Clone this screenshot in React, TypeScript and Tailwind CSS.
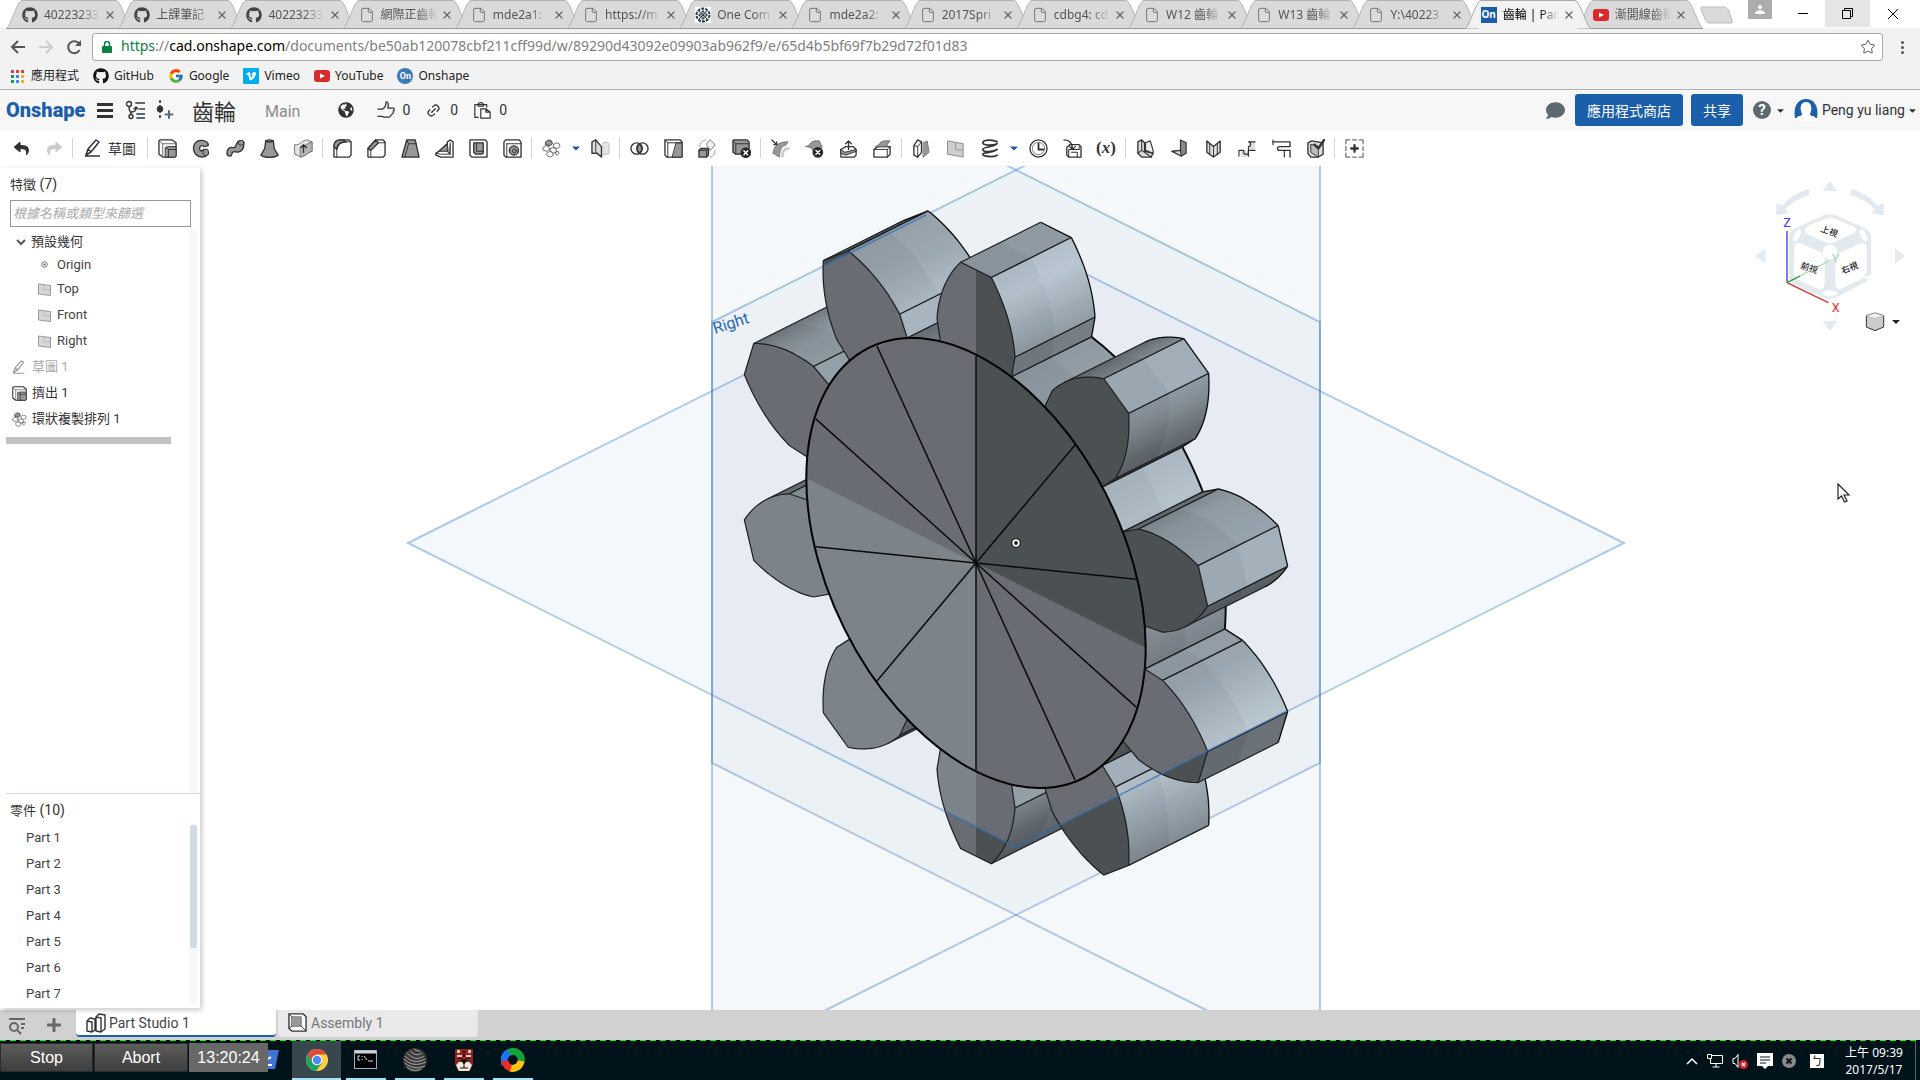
import React from "react";
import { FaGithub, FaGlobeAmericas, FaComment, FaCaretDown, FaPlus, FaReply } from "react-icons/fa";
import { FcGoogle } from "react-icons/fc";
import { File as FileIcon, Link2, X, Star } from "lucide-react";

type Pt = [number, number];

/* ---------- small helpers ---------- */

function Ico({ children, size = 20 }: { children: React.ReactNode; size?: number }) {
  return (
    <svg width={size} height={size} viewBox="0 0 20 20" fill="none" stroke="#333" strokeWidth="1.4" strokeLinejoin="round" strokeLinecap="round" aria-hidden="true" className="shrink-0">
      {children}
    </svg>
  );
}

const G = "#989898";

const glyphs: Record<string, React.ReactNode> = {
  extrude: (<><path d="M1 2l1-1h13l4 3v14l-1 1H5l-4-3z" fill="#fff" /><path d="M1 2l4 3h14M5 5v14" strokeWidth="1" stroke="#666" /><path d="M8 9l2-1h9v10l-1 1H8z" fill={G} strokeWidth="1" /><path d="M8 9l3 2h8M11 11v8" strokeWidth="1" /></>),
  revolve: (<><path d="M17 5c-3-5-13-5-15 2-2 8 4 12 9 12 3 0 5-2 6-3l-1-4-4-1c-1 2-4 2-4-1s3-4 5-2l4-1z" fill={G} /><ellipse cx="14.500" cy="14" rx="3" ry="3.500" fill={G} strokeWidth="1" /></>),
  sweep: (<><path d="M1 15c0-5 3-7 7-6 3 1 2-6 6-7l3 0c3 2 2 9-2 11-4 2-6-1-8 1-1 1-1 4-2 4-3 0-4-1-4-3z" fill={G} /><ellipse cx="16" cy="4" rx="3" ry="2.500" strokeWidth="1" fill={G} /></>),
  loft: (<><path d="M6 2c2-1 6-1 8 0l1 8 4 7c-4 3-14 3-18 0l4-7z" fill={G} /><path d="M6 2c2 1.500 6 1.500 8 0" /></>),
  thicken: (<><path d="M1 6c6 1 7-5 13-5l5 2v10c-5 1-6 5-12 6l-6-3z" fill="#e2e2e2" stroke="#777" strokeWidth="1" /><path d="M7 9c5-1 7-5 12-6v10c-5 1-6 5-12 6z" fill="#b5b5b5" stroke="#777" strokeWidth="1" /><path d="M10 14V6M7 9l3-3 3 3" /></>),
  fillet: (<><path d="M1 8c0-5 3-7 7-7h9l2 2v14l-2 2H1z" fill="#fff" /><path d="M1 8c0-5 3-7 7-7h3l3 2c-6 0-9 2-10 8z" fill={G} /><path d="M4 19V9c1-4 3-6 8-6h7" strokeWidth="1" /></>),
  chamfer: (<><path d="M1 10l8-9h8l2 2v14l-2 2H1z" fill="#fff" /><path d="M1 10l8-9 3 3-8 8z" fill={G} /><path d="M4 19v-7l8-8h7" strokeWidth="1" /></>),
  draft: (<><path d="M6 1h9l4 18H1z" fill={G} /><path d="M6 1l2 4-4 14M8 5h8" strokeWidth="1" /></>),
  rib: (<><path d="M1 15l3-2 9-8V3l3-2 3 2v16H6l-5-2z" fill="#fff" /><path d="M4 13h9V5zM16 4v12l-3-3" fill={G} strokeWidth="1.100" /><path d="M1 15l5 1h10" strokeWidth="1" /></>),
  shell: (<><path d="M1 1h16l2 2v16H3l-2-2z" fill="#fff" /><path d="M5 4h10v11l-2 1H7l-2-2z" fill={G} /><path d="M8 4v9h7" strokeWidth="1" /></>),
  hole: (<><path d="M1 3l2-2h14l2 2v16H3l-2-2z" fill="#fff" /><path d="M4 5h15M4 5v14" strokeWidth="1" /><circle cx="11.500" cy="12" r="4.800" fill={G} /><circle cx="12" cy="12.500" r="2" strokeWidth="1" /></>),
  pattern: (<><path d="M4 3l3-2 3 1 1 3-3 2-4-1z" fill={G} strokeWidth="1" /><path d="M12 6l3-2 3 1 1 3-3 2-3-1zM1 9l3-2 3 1 1 3-3 2-3-1zM9 10l3-1 3 2v3l-3 1-3-2zM5 15l3-2 3 1 1 3-3 2-3-1zM14 14l3-1 1 2-2 2z" fill="#fff" stroke="#666" strokeWidth="1" /></>),
  mirror: (<><path d="M1 3l4-2 6 7v11l-5-4H1z" fill="#ddd" /><path d="M5 1v12l6 6" strokeWidth="1" /><path d="M13 4l3-1 3 2v10l-6 2z" fill="#e5e5e5" stroke="#bbb" strokeWidth="1" /></>),
  boolean: (<><circle cx="7" cy="10" r="6" /><circle cx="13" cy="10" r="6" /><path d="M10 5c3 3 3 7 0 10-3-3-3-7 0-10z" fill={G} /></>),
  split: (<><path d="M1 1h16l2 2v16H3l-2-2z" fill="#fff" /><path d="M13 4h6v15H9z" fill={G} strokeWidth="1" /><path d="M1 1l3 3h15M4 4v15" strokeWidth="1" /></>),
  transform: (<><path d="M1 12l2-2h8v7l-2 2H1z" fill={G} /><path d="M1 12h8v7M9 12l2-2" strokeWidth="1" /><path d="M13 1l5 5-5 6-4-6z" fill="#eee" stroke="#777" strokeWidth="1" /><path d="M2 8c0-4 2-6 6-7M18 12c0 4-2 6-5 7" stroke="#999" strokeWidth="1" /></>),
  deletePart: (<><path d="M1 2l1-1h14l2 2v13H4l-3-2z" fill={G} /><path d="M1 2l3 3h14M4 5v11" strokeWidth="1" /><circle cx="14.500" cy="14.500" r="5" fill="#222" /><path d="M12.500 12.500l4 4m0-4l-4 4" stroke="#fff" strokeWidth="1.500" /></>),
  modifyFillet: (<><path d="M4 9c2-4 7-6 14-6l-3 4c-4 0-6 5-6 12L2 15c0-2 1-4 2-6z" fill={G} stroke="#777" strokeWidth="1" /><path d="M12 18c0-4 2-8 6-8" stroke="#ccc" strokeWidth="3" /><path d="M1 1l5 5M6 3v3H3" strokeWidth="1.300" /></>),
  deleteFace: (<><path d="M1 8c4 0 4-5 9-6h5l3 7-8 7c-1-5-4-8-9-8z" fill={G} strokeWidth="1" stroke="#666" /><circle cx="13.500" cy="14" r="5" fill="#222" /><path d="M11.500 12l4 4m0-4l-4 4" stroke="#fff" strokeWidth="1.500" /></>),
  moveFace: (<><path d="M2 11l5-3h8l3 3v6l-2 2H2z" fill="#fff" /><path d="M2 11l4 3 12-3v2L7 17l-5-2z" fill={G} strokeWidth="1" /><path d="M10 11V2M7 5l3-3 3 3" /></>),
  replaceFace: (<><path d="M1 11l4-3h13v8l-3 3H1z" fill="#fff" /><path d="M1 11h14l3-3M15 11v8" strokeWidth="1" /><path d="M3 8c4-1 4-6 9-6h6c-3 2-2 5-5 6z" fill={G} stroke="#666" strokeWidth="1" /></>),
  offset: (<><path d="M2 7l4-6 4 2v11l-4 5-4-2z" fill="#fff" /><path d="M2 7l4 1 4-5M6 8v11" strokeWidth="1" /><path d="M12 4l4-2 2 12-6 5z" fill={G} stroke="#777" strokeWidth="1" /></>),
  plane: (<><path d="M2 2l16 3v14L2 16z" fill="#cfcfcf" stroke="#888" strokeWidth="1" /><path d="M10 4v7l8 1" stroke="#999" strokeWidth="1" /></>),
  helix: (<path d="M18 3c-5-3-15-2-15 1s10 3 15 1c-4 4-15 3-15 6s10 3 15 0c-4 4-15 3-15 5s10 4 15 1" strokeWidth="1.800" />),
  curve: (<><circle cx="10" cy="10" r="9" /><circle cx="10" cy="10" r="6.500" stroke="#777" strokeWidth="1" /><path d="M10 5v6h5" strokeWidth="2" /></>),
  importPart: (<><path d="M4 9l3-3h10l2 2v11H6l-2-2z" fill="#fff" /><path d="M6 11h11V8M6 11v8M9 14h6v5" strokeWidth="1.100" /><path d="M1 1c6 0 9 3 9 10M7 8l3 3 3-3" /></>),
  sheet1: (<><path d="M2 3l4-2 3 3v9l9 2-2 4H6l-4-4z" fill="#ddd" /><path d="M6 1v11l-4 3M6 12l10 7" strokeWidth="1.100" /><path d="M10 4l5-2 3 10v3l-8-3z" fill="#eee" strokeWidth="1.200" /></>),
  sheet2: (<><path d="M2 13l9-1V1l6 3v11l-5 3z" fill="#888" strokeWidth="1.200" /><path d="M2 13l9-1 1 6z" fill="#ddd" strokeWidth="1.200" /></>),
  sheet3: (<><path d="M3 2l7 6 7-6v12l-7 5-7-5z" fill="#ddd" /><path d="M10 8v11M6 5v11M14 5v11" strokeWidth="1" /></>),
  sheet4: (<><path d="M3 12h9v7H3zM12 2h6v9h-6z" fill="#ddd" stroke="none" /><path d="M1 18v-6h5v2c0 3 5 3 5 0V8c3 0 3-5 0-5h7M12 12h6M11 14v4" strokeWidth="1.200" /></>),
  sheet5: (<><path d="M1 3h18V8H8c-3 0-3 4 0 4h11v7" /><path d="M1 1v5M13 12v7" strokeWidth="1.200" /></>),
  finish: (<><path d="M2 4l4-2 12 2v12l-5 3H5l-3-4z" fill="#ddd" /><path d="M5 6v8l8 5V8z" fill="#bbb" strokeWidth="1" /><path d="M9 6l4 4 6-9" strokeWidth="2.500" /></>),
  addTool: (<><path d="M1 5V1h4M8 1h4M15 1h4v4M19 8v4M19 15v4h-4M12 19H8M5 19H1v-4M1 12V8" stroke="#777" /><path d="M10 6.500v7M6.500 10h7" strokeWidth="2.400" /></>),
};

const toolGroups: string[][] = [
  ["extrude", "revolve", "sweep", "loft", "thicken"],
  ["fillet", "chamfer", "draft", "rib", "shell", "hole"],
  ["pattern", "caret", "mirror"],
  ["boolean", "split", "transform", "deletePart"],
  ["modifyFillet", "deleteFace", "moveFace", "replaceFace"],
  ["offset", "plane", "helix", "caret", "curve", "importPart", "variable"],
  ["sheet1", "sheet2", "sheet3", "sheet4", "sheet5", "finish"],
  ["addTool"],
];

function Pencil({ color = "#333", size = 18 }: { color?: string; size?: number }) {
  return (
    <svg width={size} height={size} viewBox="0 0 18 18" fill="none" stroke={color} strokeWidth="1.500" strokeLinejoin="round" aria-hidden="true" className="shrink-0">
      <path d="M2 16l2-6 8-9 3 2-8 10zM4 10l3 3M1 17h15" />
    </svg>
  );
}

/* ---------- browser chrome ---------- */

function YouTubeIcon() {
  return (
    <svg width="16" height="16" viewBox="0 0 16 16" aria-hidden="true" className="shrink-0">
      <rect x="0" y="2" width="16" height="12" rx="3" fill="#d92b2b" />
      <path d="M6 5.500l5 2.500-5 2.500z" fill="#fff" />
    </svg>
  );
}

const tabs = [
  { icon: "gh", t: "40223233" },
  { icon: "gh", t: "上課筆記" },
  { icon: "gh", t: "40223233" },
  { icon: "f", t: "網際正齒輪" },
  { icon: "f", t: "mde2a1:" },
  { icon: "f", t: "https://m" },
  { icon: "oc", t: "One Com" },
  { icon: "f", t: "mde2a2:" },
  { icon: "f", t: "2017Spri" },
  { icon: "f", t: "cdbg4: cd" },
  { icon: "f", t: "W12 齒輪" },
  { icon: "f", t: "W13 齒輪" },
  { icon: "f", t: "Y:\\40223" },
  { icon: "on", t: "齒輪 | Par", active: true },
  { icon: "yt", t: "漸開線齒輪" },
];

function TabIcon({ k }: { k: string }) {
  if (k === "gh") return <FaGithub size={16} className="shrink-0 text-[#444]" />;
  if (k === "yt") return <YouTubeIcon />;
  if (k === "on") return <span className="flex h-4 w-4 shrink-0 items-center justify-center bg-[#1b5dab] text-[10px] font-bold text-white">On</span>;
  if (k === "oc")
    return (
      <svg width="16" height="16" viewBox="0 0 16 16" fill="none" stroke="#333f44" aria-hidden="true" className="shrink-0 bg-white">
        <circle cx="8" cy="8" r="6.500" strokeWidth="2" strokeDasharray="3 1" />
        <path d="M3 8h10M8 2v12M4 4l8 8M12 4l-8 8" />
        <circle cx="8" cy="8" r="3.500" />
      </svg>
    );
  return <FileIcon size={16} strokeWidth={1.5} className="shrink-0 text-[#777]" />;
}

function TabStrip() {
  return (
    <div className="flex h-[28px] bg-white pl-[6px] font-['Noto_Sans','Noto_Sans_CJK_TC',sans-serif]">
      <div role="tablist" className="flex min-w-0 flex-1">
        {tabs.map((tab, i) => (
          <div key={i} className={`relative flex min-w-0 flex-1 items-center pl-4 ${tab.active ? "z-10" : ""}`}>
            <svg className="absolute top-0 left-0 h-[29px] w-[126px]" viewBox="0 0 126 29" aria-hidden="true">
              <path d="M0 28.500C4 28.500 11 0.500 16 0.500H110C115 0.500 122 28.500 126 28.500" fill={tab.active ? "#f2f2f2" : "#dadada"} stroke={tab.active ? "#a8a8a8" : "#b4b4b4"} />
              {!tab.active && <path d="M0 28.500H126" stroke="#999" />}
            </svg>
            <button role="tab" aria-selected={!!tab.active} className={`relative flex min-w-0 flex-1 items-center gap-[6px] pt-px text-xs ${tab.active ? "text-black" : "text-[#555]"}`}>
              <TabIcon k={tab.icon} />
              <span className="w-[56px] shrink-0 overflow-hidden text-left whitespace-nowrap [mask-image:linear-gradient(to_right,black_65%,transparent)]">{tab.t}</span>
            </button>
            <button aria-label={`Close ${tab.t}`} className="relative mr-px flex w-[14px] justify-center pt-px text-[#666]">
              <X size={12} strokeWidth={2.5} />
            </button>
          </div>
        ))}
      </div>
      <div className="flex w-[231px] items-start">
        <button aria-label="New tab" className="ml-[9px] h-[24px]">
          <svg width="36" height="24" viewBox="0 0 36 24" aria-hidden="true">
            <path d="M5 7H25C28 7 30 9 31 11L34 21C35 23 34 23 32 23H12C9 23 8 21 7 19L3 9C2 7 3 7 5 7Z" fill="#dadada" stroke="#bbb" />
          </svg>
        </button>
        <span className="ml-[14px] flex h-[19px] w-[24px] items-center justify-center bg-[#adadad]">
          <svg width="12" height="12" viewBox="0 0 12 12" fill="#fff" aria-hidden="true"><circle cx="6" cy="3" r="2" /><path d="M1 10c0-5 10-5 10 0z" /></svg>
        </span>
        <button aria-label="Minimize" className="ml-[8px] flex h-[27px] w-[45px] items-center justify-center"><span className="block h-px w-[10px] bg-black" /></button>
        <button aria-label="Restore" className="flex h-[27px] w-[45px] items-center justify-center bg-[#e5e5e5]">
          <svg width="11" height="11" viewBox="0 0 11 11" fill="none" stroke="#000" aria-hidden="true"><path d="M.5 2.500h8v8h-8zM2.500 2.500v-2h8v8h-2" /></svg>
        </button>
        <button aria-label="Close" className="flex h-[27px] w-[45px] items-center justify-center">
          <svg width="12" height="12" viewBox="0 0 12 12" stroke="#000" aria-hidden="true"><path d="M1 1l10 10M11 1L1 11" /></svg>
        </button>
      </div>
    </div>
  );
}

function AddressBar() {
  return (
    <div className="flex h-[38px] items-center bg-[#f2f2f2] pr-[12px] pl-[9px]">
      <button aria-label="Back" className="w-[18px]">
        <svg width="18" height="18" viewBox="0 0 18 18" fill="none" stroke="#555" strokeWidth="2" aria-hidden="true"><path d="M16 9H3M9 3L3 9l6 6" /></svg>
      </button>
      <button aria-label="Forward" className="ml-[10px] w-[18px]">
        <svg width="18" height="18" viewBox="0 0 18 18" fill="none" stroke="#ccc" strokeWidth="2" aria-hidden="true"><path d="M2 9h13M9 3l6 6-6 6" /></svg>
      </button>
      <button aria-label="Reload" className="ml-[10px] w-[18px]">
        <svg width="18" height="18" viewBox="0 0 18 18" fill="none" stroke="#555" strokeWidth="2" aria-hidden="true"><path d="M14.500 12A6 6 0 1 1 14 5.500" /><path d="M16 2v6h-6z" fill="#555" stroke="none" /></svg>
      </button>
      <div className="ml-[9px] flex h-[28px] flex-1 items-center rounded-[3px] border border-[#a9a9a9] bg-white pr-[6px] pl-[9px]">
        <svg width="10" height="12" viewBox="0 0 10 12" aria-hidden="true"><rect x="0" y="5" width="10" height="7" rx="1" fill="#0b8043" /><path d="M2.500 5V3a2.500 2.500 0 0 1 5 0v2" fill="none" stroke="#0b8043" strokeWidth="1.500" /></svg>
        <div className="ml-[9px] flex-1 pb-[2px] font-['Noto_Sans',sans-serif] text-sm whitespace-nowrap text-[#808080]">
          <span className="text-[#0b8043]">https</span>://<span className="text-black">cad.onshape.com</span>/documents/be50ab120078cbf211cff99d/w/89290d43092e09903ab962f9/e/65d4b5bf69f7b29d72f01d83
        </div>
        <button aria-label="Bookmark this page"><Star size={16} strokeWidth={1.5} className="text-[#555]" /></button>
      </div>
      <button aria-label="Chrome menu" className="ml-[13px] flex w-[12px] flex-col items-center gap-[2px]">
        <span className="h-[3px] w-[3px] rounded-full bg-[#555]" /><span className="h-[3px] w-[3px] rounded-full bg-[#555]" /><span className="h-[3px] w-[3px] rounded-full bg-[#555]" />
      </button>
    </div>
  );
}

function Bookmarks() {
  const dots = ["#db4437", "#db4437", "#db4437", "#0f9d58", "#4285f4", "#f4b400", "#0f9d58", "#4285f4", "#f4b400"];
  const link = "flex items-center gap-[5px]";
  return (
    <div className="flex h-[24px] items-center gap-[14px] border-b border-[#b2b2b2] bg-[#f2f2f2] pb-[3px] pl-[11px] font-['Noto_Sans','Noto_Sans_CJK_TC',sans-serif] text-xs text-[#222]">
      <a href="#apps" className="flex items-center gap-[7px]">
        <span className="grid grid-cols-3 gap-[2px]">{dots.map((c, i) => <span key={i} className="h-[3px] w-[3px]" style={{ backgroundColor: c }} />)}</span>
        應用程式
      </a>
      <a href="#github" className={link}><FaGithub size={16} className="text-[#111]" />GitHub</a>
      <a href="#google" className={link}><FcGoogle size={16} />Google</a>
      <a href="#vimeo" className={link}>
        <svg width="16" height="16" viewBox="0 0 16 16" aria-hidden="true"><rect width="16" height="16" rx="1" fill="#00adef" /><path d="M3 6l3-2c2 0 1 5 2.500 5.500C9.500 9 10 7 8.500 6.500 9 3.500 13 3 13 5.500c0 3-4 7-5.500 7S6 8 5 6.500L4 7z" fill="#fff" /></svg>
        Vimeo
      </a>
      <a href="#youtube" className={link}><YouTubeIcon />YouTube</a>
      <a href="#onshape" className={link}><span className="flex h-4 w-4 items-center justify-center rounded-full bg-[#3d78b8] font-['Roboto'] text-[9px] font-bold text-white">On</span>Onshape</a>
    </div>
  );
}

/* ---------- application header and tools ---------- */

function AppHeader() {
  return (
    <header className="flex h-[40px] items-center bg-[#f7f7f7] pr-[2px] pl-[6px] text-[#333]">
      <a href="#home" className="w-[91px] font-['Roboto'] text-xl font-black text-[#1b5faa]">Onshape</a>
      <button aria-label="Menu" className="flex w-[16px] flex-col gap-[3px]"><span className="h-[3px] bg-[#333]" /><span className="h-[3px] bg-[#333]" /><span className="h-[3px] bg-[#333]" /></button>
      <button aria-label="Versions" className="ml-[12px]"><Ico><circle cx="4" cy="4" r="2.500" /><circle cx="6" cy="16.500" r="2" /><path d="M4 7c0 5 2 4 2 7M6 12c4 0 5-1 5-4M9 9l2-2 2 2" /><path d="M11 3h9M15 9h5M12 14h8M12 18h8" stroke="#5d6971" strokeWidth="1.800" /></Ico></button>
      <button aria-label="Insert" className="ml-[10px]"><Ico><path d="M5 1v18" strokeDasharray="1 4" strokeWidth="2" /><circle cx="5" cy="9" r="2.500" fill="#333" /><path d="M14 11v7M10.500 14.500h7" stroke="#5d6971" strokeWidth="2" /></Ico></button>
      <h1 className="ml-[17px] font-['Noto_Sans_CJK_TC',sans-serif] text-[22px] leading-8">齒輪</h1>
      <span className="ml-[29px] pt-1 font-['Roboto'] text-base text-[#8a8a8a]">Main</span>
      <FaGlobeAmericas size={16} className="ml-[38px]" />
      <div className="ml-[23px] flex items-center gap-[16px] font-['Roboto'] text-sm">
        <button className="flex items-center gap-[7px]">
          <Ico size={18}><path d="M1 9h5c2-1 4-4 4-8 3 0 3 3 2 7h6c2 0 1 3 0 3 1 1 0 3-1 3 0 2-1 2-2 2 0 2-1 2-2 2H9c-2 0-3-1-4-1H1" /></Ico>0
        </button>
        <button className="flex items-center gap-[9px]"><Link2 size={15} strokeWidth={2} className="-rotate-45" />0</button>
        <button className="flex items-center gap-[8px]"><Ico size={17}><path d="M5 18H1V3h14v3M5 3c0-3 6-3 6 0v2H5z" /><path d="M8 8h6l5 4v7H8zM14 8v4h5" fill="#fff" /></Ico>0</button>
      </div>
      <div className="flex-1" />
      <button aria-label="Comments"><FaComment size={19} className="text-[#5d6971]" /></button>
      <button className="ml-[10px] h-[32px] w-[108px] rounded-[3px] bg-[#1b5faa] font-['Noto_Sans_CJK_TC',sans-serif] text-sm text-white">應用程式商店</button>
      <button className="ml-2 h-[32px] w-[52px] rounded-[3px] bg-[#1b5faa] font-['Noto_Sans_CJK_TC',sans-serif] text-sm text-white">共享</button>
      <button aria-label="Help" className="ml-[10px] flex items-center gap-1">
        <span className="flex h-[18px] w-[18px] items-center justify-center rounded-full bg-[#5d6971] font-['Roboto'] text-[15px] font-bold text-white">?</span>
        <FaCaretDown size={11} />
      </button>
      <button className="ml-[8px] flex items-center font-['Roboto'] text-sm">
        <svg width="24" height="24" viewBox="0 0 24 24" aria-hidden="true"><path d="M1 20C-1 8 4 1 12 1s13 7 11 19z" fill="#1b5faa" /><path d="M12 4c5 0 6 5 5 9-1 3-2 4 1 5 3 0 4 2 5 5H1c1-3 2-5 5-5 3-1 2-2 1-5-1-4 0-9 5-9z" fill="#fff" /></svg>
        <span className="ml-[4px]">Peng yu liang</span>
        <FaCaretDown size={11} className="ml-[2px]" />
      </button>
    </header>
  );
}

function Separator() {
  return <span className="mx-[2px] h-[20px] w-px shrink-0 bg-[#d5d5d5]" />;
}

function Toolbar() {
  return (
    <div role="toolbar" className="flex h-[36px] items-center bg-white pl-[11px]">
      <button aria-label="Undo" className="flex w-[20px] justify-center"><FaReply size={15} className="text-[#333]" /></button>
      <button aria-label="Redo" className="ml-[13px] flex w-[20px] justify-center"><FaReply size={15} className="-scale-x-100 text-[#ccc]" /></button>
      <span className="ml-[6px] flex"><Separator /></span>
      <button className="ml-[9px] flex w-[61px] items-center gap-[6px] font-['Noto_Sans_CJK_TC',sans-serif] text-[14px] text-[#333]"><Pencil />草圖</button>
      {toolGroups.map((group, i) => (
        <div key={i} className="flex items-center">
          <Separator />
          {group.map((name, j) =>
            name === "caret" ? (
              <button key={j} aria-label="More" className="flex w-[15px] justify-center"><FaCaretDown size={12} className="text-[#1b5faa]" /></button>
            ) : name === "variable" ? (
              <button key={j} aria-label="Variable" className="w-[34px] text-center font-['Liberation_Serif',serif] text-[17px] leading-5 font-bold text-[#333]">(<i>x</i>)</button>
            ) : (
              <button key={j} aria-label={name} className="flex w-[34px] justify-center"><Ico size={19}>{glyphs[name]}</Ico></button>
            ),
          )}
        </div>
      ))}
    </div>
  );
}

/* ---------- feature list ---------- */

function PlaneIcon() {
  return (
    <svg width="13" height="13" viewBox="0 0 13 13" fill="#d6d6d6" stroke="#999" aria-hidden="true"><path d="M.5 1l12 1.500v10L.5 11z" /><path d="M6 2v4.500l6 .5" stroke="#bbb" /></svg>
  );
}

function FeaturePanel() {
  const row = "flex h-[26px] w-full items-center text-left";
  return (
    <aside className="relative z-10 mt-[2px] mb-[2px] flex w-[200px] shrink-0 flex-col bg-white font-['Roboto','Noto_Sans_CJK_TC',sans-serif] text-[13px] text-[#444] shadow-[2px_2px_5px_rgba(0,0,0,0.22)]">
      <section className="flex min-h-0 flex-[626] flex-col">
        <h2 className="pt-[7px] pl-[10px] text-sm leading-[18px] text-[#333]"><span className="text-[13px]">特徵</span> (7)</h2>
        <input aria-label="根據名稱或類型來篩選" placeholder="根據名稱或類型來篩選" className="mt-[6px] ml-[10px] h-[27px] w-[181px] shrink-0 border border-[#999] bg-white px-[2px] text-[13px] italic outline-none placeholder:text-[#aaa]" />
        <div className="mt-[4px] mr-[3px] flex min-h-0 flex-1">
          <div className="min-w-0 flex-1">
            <button className="flex h-[22px] w-full items-center gap-[5px] pl-[16px] text-[#333]">
              <svg width="10" height="7" viewBox="0 0 10 7" fill="none" stroke="#555" strokeWidth="2" aria-hidden="true"><path d="M1 1l4 4 4-4" /></svg>
              預設幾何
            </button>
            <button className="flex h-[23px] w-full items-center pl-[41px]">
              <svg width="7" height="7" viewBox="0 0 7 7" fill="none" stroke="#777" aria-hidden="true"><circle cx="3.500" cy="3.500" r="2.800" /><circle cx="3.500" cy="3.500" r=".8" fill="#777" /></svg>
              <span className="ml-[9px]">Origin</span>
            </button>
            {["Top", "Front", "Right"].map((n) => (
              <button key={n} className={`${row} gap-[6px] pl-[38px]`}><PlaneIcon />{n}</button>
            ))}
            <button className={`${row} gap-[6px] pl-[12px] text-[#aaa]`}><Pencil color="#999" size={14} />草圖 1</button>
            <button className={`${row} gap-[5px] pl-[12px] text-[#333]`}><Ico size={15}>{glyphs.extrude}</Ico>擠出 1</button>
            <button className={`${row} gap-[5px] pl-[12px] text-[#333]`}><Ico size={15}>{glyphs.pattern}</Ico>環狀複製排列 1</button>
            <div className="mt-[5px] ml-[6px] h-[7px] w-[165px] bg-[#c1c1c1]" />
          </div>
          <div className="w-[7px] bg-[#f7f8fa]" />
        </div>
      </section>
      <section className="ml-[6px] flex min-h-0 flex-[214] flex-col border-t border-[#cddae5]">
        <h2 className="pt-[7px] pl-[4px] text-sm leading-[18px] text-[#333]"><span className="text-[13px]">零件</span> (10)</h2>
        <div className="mt-[5px] mr-[3px] mb-[4px] flex min-h-0 flex-1">
          <ul className="min-w-0 flex-1 overflow-hidden">
            {[1, 2, 3, 4, 5, 6, 7].map((n) => (
              <li key={n} className="h-[26px] pl-[20px] leading-[25px]">Part {n}</li>
            ))}
          </ul>
          <div className="w-[7px] bg-[#f7f8fa]"><div className="h-[123px] rounded-[2px] bg-[#cfdce6]" /></div>
        </div>
      </section>
    </aside>
  );
}

/* ---------- gear model ---------- */

interface Vertex { p: Pt; crease: boolean; body: boolean }

const DEPTH: Pt = [80, -40];
const TEETH = 10;
const HUB = 1.007;
const project = ([s, t]: Pt): Pt => [976 + 168.5 * s, 563 + 84.25 * s - 207 * t];
const turn = ([s, t]: Pt, a: number): Pt => [s * Math.cos(a) + t * Math.sin(a), -s * Math.sin(a) + t * Math.cos(a)];

const BASE: Pt = [0.211, 0.985];
const BEND: Pt = [0.2315, 1.089];
const TIP: Pt = [0.091, 1.416];
const CTRL: Pt = [0.215, 1.27];
const STEPS = 14;

function toothProfile(): Vertex[] {
  const right: Vertex[] = [];
  for (let i = 0; i <= STEPS; i++) {
    const k = i / STEPS;
    const a = (1 - k) * (1 - k);
    const b = 2 * k * (1 - k);
    const c = k * k;
    right.push({ p: [a * TIP[0] + b * CTRL[0] + c * BEND[0], a * TIP[1] + b * CTRL[1] + c * BEND[1]], crease: i === 0 || i === STEPS, body: false });
  }
  right.push({ p: BASE, crease: true, body: false });
  const left = right.map((v) => ({ ...v, p: [-v.p[0], v.p[1]] as Pt })).reverse();
  return [...left, ...right];
}

const SHADES: Pt[] = [[-180, 80], [-60, 85], [-30, 105], [-10, 138], [0, 150], [30, 163], [45, 180], [58, 196], [72, 172], [90, 143], [110, 106], [130, 90], [180, 80]];

function shade(deg: number): number {
  for (let i = 1; i < SHADES.length; i++) {
    const [d0, b0] = SHADES[i - 1];
    const [d1, b1] = SHADES[i];
    if (deg <= d1) return b0 + ((b1 - b0) * (deg - d0)) / (d1 - d0);
  }
  return 80;
}

const tone = (b: number) => `rgb(${Math.round(b * 0.93)},${Math.round(b)},${Math.round(b * 1.055)})`;
const pts = (list: Pt[]) => list.map((q) => `${q[0].toFixed(2)},${q[1].toFixed(2)}`).join(" ");
const shift = (q: Pt, k: number): Pt => [q[0] + DEPTH[0] * k, q[1] + DEPTH[1] * k];

/* Across-depth axis: a wall's gradient runs along it. */
const AXIS: Pt = [1 / Math.sqrt(5), 2 / Math.sqrt(5)];
const along = (q: Pt) => q[0] * AXIS[0] + q[1] * AXIS[1];

interface Wall { line: Pt[]; angles: number[]; body: boolean; order: number }

function buildGear() {
  const outline: Vertex[] = [];
  const faces: Pt[][] = [];
  const profile = toothProfile();
  const half = Math.atan2(BASE[0], BASE[1]);
  for (let i = 0; i < TEETH; i++) {
    const a = (i * 2 * Math.PI) / TEETH;
    const tooth = profile.map((v) => ({ ...v, p: turn(v.p, a) }));
    faces.push(tooth.map((v) => project(v.p)));
    tooth[tooth.length - 1].body = true;
    outline.push(...tooth);
    const gap = (2 * Math.PI) / TEETH - 2 * half;
    for (let j = 1; j < 6; j++) {
      const b = a + half + (gap * j) / 6;
      outline.push({ p: [HUB * Math.sin(b), HUB * Math.cos(b)], crease: false, body: true });
    }
  }
  const n = outline.length;
  const walls: Wall[] = [];
  let current: Wall | null = null;
  for (let i = 0; i < n; i++) {
    const v = outline[i];
    const w = outline[(i + 1) % n];
    const a = project(v.p);
    const b = project(w.p);
    const visible = DEPTH[0] * (b[1] - a[1]) - DEPTH[1] * (b[0] - a[0]) > 0;
    if (!visible) {
      current = null;
      continue;
    }
    const angle = (Math.atan2(-(w.p[1] - v.p[1]), w.p[0] - v.p[0]) * 180) / Math.PI;
    if (!current || v.crease) {
      current = { line: [a], angles: [], body: v.body, order: 0 };
      walls.push(current);
    }
    current.line.push(b);
    current.angles.push(angle);
  }
  for (const w of walls) {
    const m: Pt = [(w.line[0][0] + w.line[w.line.length - 1][0]) / 2, (w.line[0][1] + w.line[w.line.length - 1][1]) / 2];
    w.order = m[0] * DEPTH[0] + m[1] * DEPTH[1];
  }
  walls.sort((x, y) => x.order - y.order);
  return { faces, walls };
}

const gear = buildGear();

function GearWall({ wall, id }: { wall: Wall; id: string }) {
  const { line, angles, body } = wall;
  const first = line[0];
  const last = line[line.length - 1];
  const d0 = along(first);
  const length = along(last) - d0;
  const levels = line.map((_, i) => {
    const before = angles[Math.max(0, i - 1)];
    const after = angles[Math.min(angles.length - 1, i)];
    return shade((before + after) / 2) - (body ? 6 : 0);
  });
  const gradient = (name: string, extra: number) => (
    <linearGradient id={name} gradientUnits="userSpaceOnUse" x1={first[0]} y1={first[1]} x2={first[0] + AXIS[0] * length} y2={first[1] + AXIS[1] * length}>
      {line.map((q, i) => <stop key={i} offset={(along(q) - d0) / length} stopColor={tone(levels[i] + extra)} />)}
    </linearGradient>
  );
  const mid = line.map((q) => shift(q, 0.5));
  const back = line.map((q) => shift(q, 1));
  return (
    <g>
      <defs>
        {gradient(`${id}n`, -3)}
        {gradient(`${id}f`, 4)}
      </defs>
      <polygon points={pts([...line, ...[...back].reverse()])} fill={`url(#${id}n)`} />
      <polygon points={pts([...mid, ...[...back].reverse()])} fill={`url(#${id}f)`} />
      <polyline points={pts(back)} stroke="#0c0c0c" strokeWidth={body ? 2 : 1.3} fill="none" strokeLinejoin="round" />
      <polyline points={pts([first, shift(first, 1)])} stroke="#1c1f21" strokeWidth="1.200" />
      <polyline points={pts([last, shift(last, 1)])} stroke="#1c1f21" strokeWidth="1.200" />
    </g>
  );
}

function GearView() {
  const spokes = Array.from({ length: TEETH }, (_, i) => project(turn([0, 1], (i * 2 * Math.PI) / TEETH)));
  const face = (fill: string) => (
    <>
      {gear.faces.map((f, i) => <polygon key={i} points={pts(f)} fill={fill} />)}
      <circle r={HUB} transform="matrix(168.5 84.25 0 207 976 563)" fill={fill} />
    </>
  );
  return (
    <svg className="block h-full w-full" viewBox="200 166 1720 844" preserveAspectRatio="xMidYMid slice" role="img" aria-label="Gear model">
      <defs>
        <clipPath id="mid">
          <path d="M976 100H1700V1000H976ZM200 100H976V563L200 175ZM600 639L1016 847L1320 695V1010H600Z" />
        </clipPath>
        <clipPath id="dark">
          <path d="M976 100H1700V925L976 563ZM976 827L1016 847L1320 695V1010H976ZM712 321L1016 170H712Z" />
        </clipPath>
      </defs>
      <g fill="#f4f8fb">
        <path d="M712 17H1320V1067H712Z" />
        <path d="M408 543L1016 239L1624 543L1016 847Z" />
      </g>
      <path d="M712 321L1016 169L1320 321V763L1016 914L712 763Z" fill="#ecf1f5" />
      <path d="M712 391L1016 239L1320 391V695L1016 847L712 695Z" fill="#e7ebf3" />
      <g fill="none" stroke="#3c7cc0" strokeOpacity="0.4" strokeWidth="2">
        <path d="M712 322L1320 18V763L712 1067Z" />
        <path d="M712 18L1320 322V1067L712 763Z" />
        <path d="M408 543L1016 239L1624 543L1016 847Z" />
      </g>
      <text x="715" y="334" transform="rotate(-18 715 334)" fill="#2b66b1" fontFamily="Roboto" fontSize="16">Right</text>

      {gear.walls.map((w, i) => <GearWall key={i} wall={w} id={`wall${i}`} />)}

      {face("#7c8389")}
      <g clipPath="url(#mid)">{face("#696c73")}</g>
      <g clipPath="url(#dark)">{face("#4b5053")}</g>
      {gear.faces.map((f, i) => (
        <polyline key={i} points={pts(f)} fill="none" stroke="#1c1f21" strokeWidth="1.200" />
      ))}
      <circle r={HUB} transform="matrix(168.5 84.25 0 207 976 563)" fill="none" stroke="#000" strokeWidth="2" vectorEffect="non-scaling-stroke" />
      {spokes.map((s, i) => <line key={i} x1="976" y1="563" x2={s[0]} y2={s[1]} stroke="#0a0a0a" strokeWidth="1.500" />)}

      <path d="M824 266L926 215M945 811L1016 847L1287 711" fill="none" stroke="#2f6cae" strokeOpacity="0.65" strokeWidth="1.600" />
      <circle cx="1016" cy="543" r="5" fill="#222" />
      <circle cx="1016" cy="543" r="2.800" fill="none" stroke="#fff" strokeWidth="1.800" />
      <path d="M1838 484v15l3.500-3 3 6 2.500-1-3-6h5z" fill="#fff" stroke="#222" strokeWidth="1.200" />
    </svg>
  );
}

function ViewCube() {
  const pale = "#e2e9ef";
  return (
    <div className="absolute top-[4px] right-0 h-[170px] w-[180px]">
      <svg width="180" height="170" viewBox="0 0 540 510" aria-label="View cube" role="img">
        <g fill={pale}>
          <path d="M270 33l22 30h-44zM270 483l22-30h-44zM45 258l30-22v44zM495 258l-30-22v44z" />
          <path d="M206 56Q155 72 127 107L110 98L108 136L146 130L136 118Q162 88 209 74Z" />
          <path d="M334 56Q385 72 413 107L430 98L432 136L394 130L404 118Q378 88 331 74Z" />
          <path d="M255 134Q270 130 285 134L378 176Q392 184 393 200V305Q393 322 380 334L290 382Q270 390 250 382L160 342Q147 334 147 320V200Q148 184 162 176Z" />
        </g>
        <g fill="#fff">
          <path d="M205 166L258 146Q270 142 284 146L342 170Q356 180 340 190L285 216Q270 222 255 216L200 192Q186 180 205 166Z" />
          <path d="M162 235Q163 214 182 220L240 246Q254 254 254 270V342Q252 362 236 358L176 330Q162 322 161 306Z" />
          <path d="M380 235Q378 214 360 220L300 248Q286 256 286 272V340Q288 362 304 356L366 326Q380 318 380 302Z" />
          <circle cx="270" cy="246" r="22" />
          <ellipse cx="270" cy="370" rx="22" ry="9" />
          <ellipse cx="171" cy="196" rx="9" ry="20" transform="rotate(25 171 196)" />
          <ellipse cx="370" cy="196" rx="9" ry="20" transform="rotate(-25 370 196)" />
          <path d="M264 128l6 10 6-10zM370 322l12 8 14-10v-6z" />
        </g>
        <g fontFamily="'Noto Sans CJK TC', sans-serif" fontWeight="500" fill="#222" fontSize="26">
          <text x="240" y="184" transform="rotate(20 240 184)">上視</text>
          <text x="180" y="294" transform="rotate(18 180 294)">前視</text>
          <text x="308" y="312" transform="rotate(-22 308 312)">右視</text>
        </g>
        <path d="M141 338V183" stroke="#3a3ae0" strokeWidth="4" />
        <path d="M141 338L265 398" stroke="#e03030" strokeWidth="4" />
        <path d="M141 338L265 274" stroke="#8fd08f" strokeWidth="3" />
        <path d="M141 338L180 318" stroke="#2ba52b" strokeWidth="4" />
        <g fontFamily="Roboto" fontSize="38">
          <text x="130" y="171" fill="#4040e8">Z</text>
          <text x="275" y="278" fill="#a5d8a8">Y</text>
          <text x="275" y="425" fill="#e03030">X</text>
        </g>
        <g stroke="#333" strokeWidth="3" strokeLinejoin="round">
          <path d="M379 437l26-8 26 8v34l-26 11-26-11z" fill="#ccc" />
          <path d="M379 437l26 8 26-8-26-8z" fill="#f2f2f2" stroke="#999" strokeWidth="1" />
        </g>
        <path d="M456 450h24l-12 12z" fill="#222" />
      </svg>
    </div>
  );
}

/* ---------- bottom bars ---------- */

function DocumentTabs() {
  return (
    <div className="flex h-[30px] items-start bg-[#d1d1d1] font-['Roboto'] text-sm">
      <button aria-label="Search tabs" className="mt-[8px] ml-[8px]">
        <svg width="18" height="17" viewBox="0 0 18 17" fill="none" stroke="#666" strokeWidth="2" aria-hidden="true"><path d="M1 1h16M13 6h4M13 10h3" /><circle cx="6" cy="9" r="4" /><path d="M9 12l4 4" /></svg>
      </button>
      <button aria-label="Add tab" className="mt-[7px] ml-[20px]"><FaPlus size={16} className="text-[#666]" /></button>
      <button className="ml-[14px] flex h-[27px] w-[200px] items-center gap-[3px] rounded-b border-b-2 border-[#1b5faa] bg-white pl-[10px] text-[#444]">
        <Ico><path d="M1 8l3-3 5 1v11l-3 2-5-1zM10 4l3-3 6 1v14l-4 3-5-1zM1 8l5 1v10M10 4l5 1v14" fill="#fff" /></Ico>
        Part Studio 1
      </button>
      <button className="ml-[2px] flex h-[27px] w-[200px] items-center gap-[4px] rounded-b bg-[#e9e9e9] pb-[2px] pl-[10px] text-[#777]">
        <Ico size={19}><path d="M1 1h15l3 3v15H4l-3-3z" fill="#fff" /><path d="M4 4h10v10H4z" fill={G} strokeWidth="1" stroke="#777" /><path d="M1 1l3 3M1 16l3-2M14 14l5 5" strokeWidth="1" /></Ico>
        Assembly 1
      </button>
    </div>
  );
}

function TaskItem({ label, active, children }: { label: string; active?: boolean; children: React.ReactNode }) {
  return (
    <button aria-label={label} className={`flex h-[39px] w-[49px] flex-col items-center ${active ? "bg-[#38474e]" : ""}`}>
      <span className="flex h-[37px] items-center justify-center">{children}</span>
      <span className={`h-[2px] bg-[#a5e3f5] ${active ? "w-full" : "w-[40px]"}`} />
    </button>
  );
}

function Taskbar() {
  const btn = "h-[29px] border border-[#2b2b2b] bg-linear-to-b from-[#5c5c5c] to-[#3e3e3e]";
  return (
    <footer className="flex h-[40px] flex-col bg-[#00121a] text-white">
      <div className="h-px bg-[repeating-linear-gradient(to_right,#00ff00_0_6px,#000_6px_10px)]" />
      <div className="flex h-[39px] justify-between">
        <div className="flex">
          <div className="flex w-[292px] items-start pt-[2px] font-['Liberation_Sans',sans-serif] text-base">
            <button className={`${btn} w-[93px]`}>Stop</button>
            <button className={`${btn} ml-px w-[94px]`}>Abort</button>
            <span className="ml-px flex h-[29px] w-[79px] items-center justify-center bg-[#686868]">13:20:24</span>
            <div className="flex w-[12px] flex-col">
              <svg width="12" height="35" viewBox="0 0 12 35" aria-hidden="true"><path d="M0 7h11L7 26H0z" fill="#3f74d1" /><path d="M0 16l3-2M0 22h4" stroke="#fff" strokeWidth="2" /></svg>
            </div>
          </div>
          <TaskItem label="Chrome" active>
            <svg width="22" height="22" viewBox="0 0 22 22" aria-hidden="true"><circle cx="11" cy="11" r="11" fill="#ffcd40" /><path d="M1.500 5.500A11 11 0 0 0 10 22l6-8-5-3z" fill="#1da462" /><path d="M1.500 5.500L7 14l4-8.500 9.500 0A11 11 0 0 0 1.500 5.500z" fill="#dd4b3e" /><circle cx="11" cy="11" r="5.300" fill="#fff" /><circle cx="11" cy="11" r="4.200" fill="#4a8af4" /></svg>
          </TaskItem>
          <TaskItem label="Command prompt">
            <svg width="23" height="19" viewBox="0 0 23 19" aria-hidden="true"><rect x=".5" y=".5" width="22" height="18" fill="#000" stroke="#aab" /><path d="M1 2h21" stroke="#cdd3d8" strokeWidth="3" /><path d="M4 6v4M4 6h2M4 10h2M8 6v1M8 9v1M10 6l3 4M14 11h5" stroke="#ddd" /></svg>
          </TaskItem>
          <TaskItem label="Sphere">
            <svg width="24" height="24" viewBox="0 0 24 24" fill="none" aria-hidden="true"><circle cx="12" cy="12" r="12" fill="#3a3a3a" /><path d="M4 5c6 6 11 7 17 3M2 8c6 6 12 7 20 3M1 11c6 6 13 7 22 3M2 15c6 5 12 6 20 3M4 19c5 4 9 4 14 2M7 3c4 4 8 5 12 2M11 1c2 2 4 2 6 2" stroke="#a8a8a8" /></svg>
          </TaskItem>
          <TaskItem label="Tiger">
            <svg width="20" height="24" viewBox="0 0 20 24" aria-hidden="true"><path d="M1 1h18v15l-3 7H4l-3-7z" fill="#8d2525" /><path d="M3 2h3v3H3zM14 2h3v3h-3zM3 7h5v2H3zM12 7h5v2h-5z" fill="#e8c9b0" /><path d="M5 14h10l3 3-3 6H5l-3-6z" fill="#f1eadc" /><path d="M7 12h6l-3 4zM6 20h8M10 16v4M4 10l4 1M16 10l-4 1M10 2v7" stroke="#1c0c0c" fill="#1c0c0c" /></svg>
          </TaskItem>
          <TaskItem label="Swirl">
            <svg width="24" height="24" viewBox="0 0 24 24" fill="none" strokeWidth="7" aria-hidden="true"><path d="M4 16A8.500 8.500 0 0 1 9 4" stroke="#1f74f0" /><path d="M8 4.500A8.500 8.500 0 0 1 20 9" stroke="#12a538" /><path d="M19.500 8A8.500 8.500 0 0 1 20 14" stroke="#12a538" /><path d="M20 13A8.500 8.500 0 0 1 9 20" stroke="#ffc20e" /><path d="M10 20A8.500 8.500 0 0 1 4 13" stroke="#ed2b24" /></svg>
          </TaskItem>
        </div>
        <div className="flex items-center">
          <div className="flex items-center gap-[9px] pr-[21px]">
            <svg width="12" height="8" viewBox="0 0 12 8" fill="none" stroke="#fff" strokeWidth="1.500" aria-label="Show hidden icons" role="img"><path d="M1 7l5-5 5 5" /></svg>
            <svg width="16" height="14" viewBox="0 0 16 14" fill="none" stroke="#fff" aria-label="Network" role="img"><path d="M5 1.500h10.500v8H3.500V5M.5 .5h4v4h-4zM9 10v3M5.500 13h7" /></svg>
            <svg width="16" height="16" viewBox="0 0 16 16" fill="none" stroke="#fff" aria-label="Volume muted" role="img"><path d="M1 5.500h2l3-4v13l-3-4H1z" /><circle cx="11.500" cy="11.500" r="4.500" fill="#d8232a" stroke="none" /><path d="M10 10l3 3m0-3l-3 3" strokeWidth="1.300" /></svg>
            <svg width="16" height="16" viewBox="0 0 16 16" fill="#fff" aria-label="Notifications" role="img"><path d="M0 0h16v13h-5l-3 3-3-3H0z" /><path d="M3 4h10M3 7h10M3 10h6" stroke="#00121a" /></svg>
            <svg width="14" height="14" viewBox="0 0 14 14" aria-label="Offline" role="img"><circle cx="7" cy="7" r="7" fill="#888" /><path d="M4.500 4.500l5 5m0-5l-5 5" stroke="#111" strokeWidth="2" /></svg>
            <span className="ml-[5px] flex h-[14px] w-[14px] items-center justify-center bg-white font-['Noto_Sans_CJK_TC'] text-[11px] leading-none text-black">ㄅ</span>
          </div>
          <time className="w-[58px] text-center font-['Noto_Sans','Noto_Sans_CJK_TC',sans-serif] text-xs leading-[17px] whitespace-nowrap">上午 09:39<br />2017/5/17</time>
          <span className="ml-[12px] h-[39px] w-[5px] border-l border-[#55636a]" />
        </div>
      </div>
    </footer>
  );
}

export default function App() {
  return (
    <div className="flex h-screen w-full flex-col overflow-hidden bg-white">
      <TabStrip />
      <AddressBar />
      <Bookmarks />
      <AppHeader />
      <Toolbar />
      <main className="flex min-h-0 flex-1">
        <FeaturePanel />
        <div className="relative min-w-0 flex-1">
          <GearView />
          <ViewCube />
        </div>
      </main>
      <DocumentTabs />
      <Taskbar />
    </div>
  );
}
